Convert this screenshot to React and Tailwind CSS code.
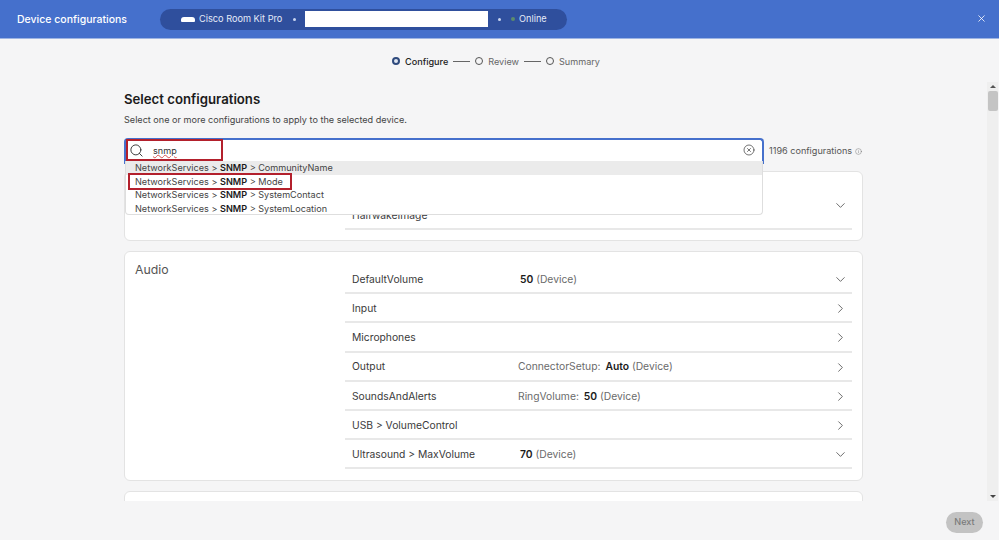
import { ChevronDown, ChevronRight, Search, X, CircleX, Info } from "lucide-react";

const audioRows = [
  { name: "DefaultVolume", bold: "50", open: true },
  { name: "Input" },
  { name: "Microphones" },
  { name: "Output", label: "ConnectorSetup:", bold: "Auto" },
  { name: "SoundsAndAlerts", label: "RingVolume:", bold: "50" },
  { name: "USB > VolumeControl" },
  { name: "Ultrasound > MaxVolume", bold: "70", open: true },
];

const suggestions = ["CommunityName", "Mode", "SystemContact", "SystemLocation"];

function Row({ name, label, bold, open }) {
  return (
    <div className="flex h-[29.2px] items-center border-b-2 border-[#e8e8e8] pl-[7px] pr-[4px] pt-[2px] text-[10.3px] text-[#3a3a3a]">
      <span className="w-[166px]">{name}</span>
      <span className={label ? "flex-1 text-[#6b6b6b]" : "flex-1 pl-[2px] text-[#6b6b6b]"}>
        {label && <span className="mr-[5px]">{label}</span>}
        {bold && <b className="font-semibold text-[#1c1c1c]">{bold}</b>}
        {bold && " (Device)"}
      </span>
      {open ? (
        <ChevronDown size={15} strokeWidth={1.25} className="text-[#444]" />
      ) : (
        <ChevronRight size={15} strokeWidth={1.25} className="text-[#444]" />
      )}
    </div>
  );
}

function Step({ label, active, line }) {
  return (
    <div className="flex items-center">
      <span
        className={
          active
            ? "h-[8px] w-[8px] rounded-full border-2 border-[#2f4a7d] bg-[#dfe5f0]"
            : "h-[8px] w-[8px] rounded-full border border-[#555]"
        }
      />
      <span className={active ? "ml-[5px] font-medium text-[#222]" : "ml-[5px] text-[#666]"}>{label}</span>
      {line && <span className="mx-[5px] h-px w-[17px] bg-[#666]" />}
    </div>
  );
}

export default function App() {
  return (
    <div className="flex h-[540px] w-[999px] flex-col overflow-hidden bg-[#f5f5f6] font-['Inter',sans-serif]">
      <header className="flex h-[39px] shrink-0 items-center border-b border-[#9db4e3] bg-[#4570cc] pl-[17px] pr-[12px] text-white">
        <h1 className="mt-px w-[143px] text-[10.5px] font-medium">Device configurations</h1>
        <div className="flex h-[21px] w-[407px] items-center rounded-full bg-[#2f4f9d] pl-[21px] text-[9.2px] text-[#e4eaf8]">
          <span className="h-[5px] w-[14px] rounded-t-[3px] rounded-b-[1px] bg-white" />
          <span className="ml-[4px] w-[83px] whitespace-nowrap">Cisco Room Kit Pro</span>
          <span className="ml-[11px] h-[3px] w-[3px] rounded-full bg-[#c9d5f0]" />
          <span className="ml-[9px] h-[16px] w-[183px] bg-white" />
          <span className="ml-[10px] h-[3px] w-[3px] rounded-full bg-[#c9d5f0]" />
          <span className="ml-[10px] h-[4px] w-[4px] rounded-full bg-[#5c8c6c]" />
          <span className="ml-[4px]">Online</span>
        </div>
        <X size={11} strokeWidth={1.75} className="ml-auto -mt-px" />
      </header>

      <div className="flex h-[43px] shrink-0 items-center justify-center pr-[7px] pt-[2px] text-[9.1px]">
        <Step label="Configure" active line />
        <Step label="Review" line />
        <Step label="Summary" />
      </div>

      <div className="flex min-h-0 flex-1">
        <main className="relative min-w-0 flex-1 overflow-hidden pl-[124px]">
          <div className="w-[739px]">
            <h2 className="mt-[9px] text-[13.2px] font-semibold leading-[16px] text-[#1b1b1b]">Select configurations</h2>
            <p className="mt-[6px] text-[9.1px] leading-[14px] text-[#444]">
              Select one or more configurations to apply to the selected device.
            </p>

            <div className="relative mt-[11px] flex h-[26px] items-center">
              <div className="flex h-[26px] w-[640px] shrink-0 items-center rounded-t-[4px] border-2 border-b-0 border-[#4570cc] bg-white pb-[4px] pr-[7px]">
                <Search size={15} strokeWidth={1.5} className="ml-[3px] text-[#333]" />
                <span className="ml-[9px] mt-[2px] text-[9.1px] text-[#333] underline decoration-wavy decoration-[#d9534f] decoration-1 underline-offset-0">snmp</span>
                <CircleX size={12} strokeWidth={1.25} className="ml-auto text-[#222]" />
              </div>
              <span className="ml-[5px] whitespace-nowrap text-[9.1px] text-[#555]">1196 configurations</span>
              <Info size={7} strokeWidth={1.25} className="ml-[3px] shrink-0 text-[#555]" />

              <ul className="absolute left-[1px] top-[23px] z-10 h-[54px] w-[638px] overflow-hidden rounded-b-[4px] border border-t-0 border-[#dedede] bg-white text-[9.1px] leading-[13.7px] text-[#444]">
                {suggestions.map((s, i) => (
                  <li key={s} className={i === 0 ? "bg-[#ebebeb] pl-[9px]" : "pl-[9px]"}>
                    NetworkServices &gt; <b className="font-semibold text-[#1b1b1b]">SNMP</b> &gt; {s}
                  </li>
                ))}
              </ul>

              {/* anotaciones rojas de la captura */}
              <span className="absolute left-[2px] top-px z-20 h-[22px] w-[97px] border-2 border-[#b3202c]" />
              <span className="absolute left-[4px] top-[35px] z-20 h-[17px] w-[164px] border-2 border-[#b3202c]" />
            </div>

            <section className="mt-[7px] flex h-[70px] rounded-[6px] border border-[#e3e3e3] bg-white pl-[220px] pr-[10px]">
              <div className="mb-[10px] flex flex-1 items-end justify-between border-b-2 border-[#e8e8e8] pl-[7px] pr-[4px] text-[10.3px] text-[#3a3a3a]">
                <span className="mb-[5px]">HalfwakeImage</span>
                <ChevronDown size={15} strokeWidth={1.25} className="mb-[15px] text-[#444]" />
              </div>
            </section>

            <section className="mt-[10px] flex h-[230px] rounded-[6px] border border-[#e3e3e3] bg-white pl-[10px] pr-[10px] pt-[11px]">
              <h3 className="w-[210px] text-[12.3px] leading-[14px] text-[#555]">Audio</h3>
              <div className="mt-[2px] flex-1">
                {audioRows.map((r) => (
                  <Row key={r.name} {...r} />
                ))}
              </div>
            </section>

            <section className="mt-[10px] h-[60px] rounded-[6px] border border-[#e3e3e3] bg-white" />
          </div>
        </main>

        <aside className="mr-px flex w-[11px] shrink-0 flex-col items-center bg-[#efefef]">
          <span className="mt-[3px] h-0 w-0 border-x-[3px] border-b-[3px] border-x-transparent border-b-[#555]" />
          <span className="mt-[3px] h-[20px] w-[10px] rounded-[2px] bg-[#c4c4c4]" />
          <span className="mb-[3px] mt-auto h-0 w-0 border-x-[3px] border-t-[3px] border-x-transparent border-t-[#444]" />
        </aside>
      </div>

      <footer className="flex h-[39px] shrink-0 items-center justify-end pr-[16px] pt-[3px]">
        <button className="h-[21px] w-[37px] rounded-full bg-[#c3c3c3] text-[9.1px] font-medium text-[#7b7b7b]">Next</button>
      </footer>
    </div>
  );
}
